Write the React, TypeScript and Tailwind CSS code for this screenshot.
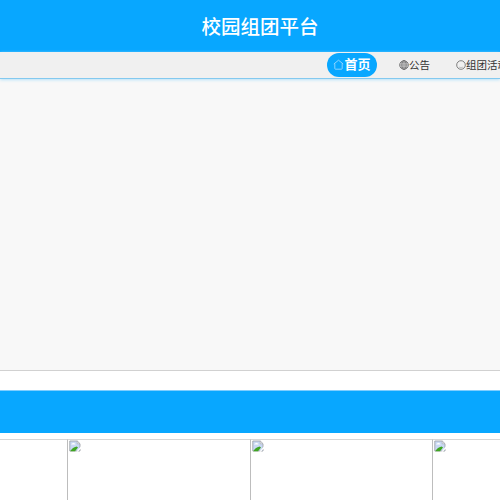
import React from "react";

function HomeIcon() {
  return (
    <svg className="h-[11px] w-[11px] shrink-0" viewBox="0 0 11 11" fill="none" stroke="#b5e3ff" strokeWidth="0.75">
      <path d="M.8 5 5.5 1.2 10.2 5M1.8 4.5v5q0 .7.7.7h6q.7 0 .7-.7v-5" />
    </svg>
  );
}

function GlobeIcon() {
  return (
    <svg className="h-[10px] w-[10px] shrink-0" viewBox="0 0 10 10" fill="none" stroke="#555" strokeWidth="0.75">
      <circle cx="5" cy="5" r="4.3" />
      <ellipse cx="5" cy="5" rx="2.1" ry="4.3" />
      <path d="M5 .7v8.6M.7 5h8.6M1.4 2.8h7.2M1.4 7.2h7.2" strokeWidth="0.5" />
    </svg>
  );
}

function FaceIcon() {
  return (
    <svg className="h-[10px] w-[10px] shrink-0" viewBox="0 0 10 10" fill="none" stroke="#444" strokeWidth="0.65">
      <circle cx="5" cy="5" r="4.3" />
      <path d="M3 7.1q2 1 4 0" opacity="0.4" />
    </svg>
  );
}

function BrokenImage() {
  return (
    <svg className="ml-px h-[12px] w-[12px]" viewBox="0 0 12 12">
      <path d="M.8 1h7.4L11 3.8V11H.8z" fill="#c8d8f3" stroke="#a2a5aa" strokeWidth="0.9" />
      <path d="M2.2 4.6q0-1.1 1.1-1.1.7-1.4 1.9-.2 1.3 0 1.3 1.3z" fill="#fff" />
      <path d="M1.2 11.2Q3 7.6 7.6 6.4L9 7.4 6 11.2z" fill="#3fa522" />
      <path d="M8.2 1v2.8H11z" fill="#f5f7fa" stroke="#a2a5aa" strokeWidth="0.6" />
      <path d="M12 6.3 7.2 11.8h1.6L12 8.3z" fill="#fff" />
    </svg>
  );
}

function Tile({ className }: { className: string }) {
  return (
    <div className={`h-full shrink-0 border-t border-l border-t-[#d7d7d7] border-l-[#bdbdbd] ${className}`}>
      <BrokenImage />
    </div>
  );
}

export default function App() {
  return (
    <div className="flex h-[500px] w-[500px] flex-col overflow-hidden bg-white font-['Noto_Sans_CJK_SC',sans-serif] whitespace-nowrap">
      <header className="flex h-[52px] shrink-0 items-center bg-[#08a7ff] pl-[201.5px] text-[19.5px] leading-none font-medium text-white">
        <h1>校园组团平台</h1>
      </header>
      <nav className="relative z-10 flex h-[27px] shrink-0 items-start border-b border-[#83c9ef] bg-[#f0f0f0] pl-[327px] text-[10.5px] text-[#333] shadow-[0_1px_3px_#b9e3f9]">
        <a className="mt-px flex h-6 w-[50px] shrink-0 items-center justify-center rounded-full bg-[#08a7ff] text-[13px] leading-none font-bold text-white">
          <span className="-mt-px">
            <HomeIcon />
          </span>
          <span className="-mt-[3px]">首页</span>
        </a>
        <a className="ml-[22px] flex h-[26px] shrink-0 items-center leading-none">
          <GlobeIcon />
          公告
        </a>
        <a className="ml-[26px] flex h-[26px] shrink-0 items-center leading-none">
          <FaceIcon />
          组团活动
        </a>
      </nav>
      <section className="h-[292px] shrink-0 border-b border-[#d1d1d1] bg-[#f8f8f8]" />
      <div className="mt-[19px] h-[43px] shrink-0 border-t border-[#7fceff] bg-[#08a7ff]" />
      <section className="mt-[6px] flex min-h-0 flex-1">
        <div className="w-[67px] shrink-0 border-t border-[#d7d7d7]" />
        <Tile className="w-[183px]" />
        <Tile className="w-[182px]" />
        <Tile className="w-[183px]" />
      </section>
    </div>
  );
}
